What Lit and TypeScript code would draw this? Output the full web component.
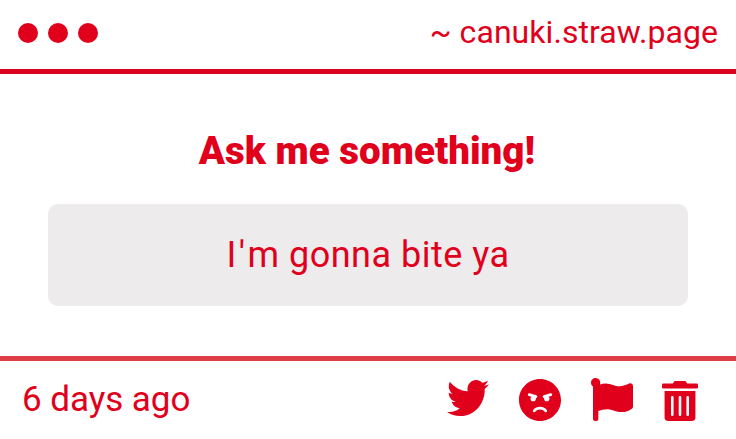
import { LitElement, html, css, svg } from 'lit';
import { customElement, property } from 'lit/decorators.js';

const ICONS = {
    twitter: {
        viewBox: '0 48 512 416',
        path: 'M459.37 151.716c.325 4.548.325 9.097.325 13.645 0 138.72-105.583 298.558-298.558 298.558-59.452 0-114.68-17.219-161.137-47.106 8.447.974 16.568 1.299 25.34 1.299 49.055 0 94.213-16.568 130.274-44.832-46.132-.975-84.792-31.188-98.112-72.772 6.498.974 12.995 1.624 19.818 1.624 9.421 0 18.843-1.3 27.614-3.573-48.081-9.747-84.143-51.98-84.143-102.985v-1.299c13.969 7.797 30.214 12.67 47.431 13.319-28.264-18.843-46.781-51.005-46.781-87.391 0-19.492 5.197-37.36 14.294-52.954 51.655 63.675 129.3 105.258 216.365 109.807-1.624-7.797-2.599-15.918-2.599-24.04 0-57.828 46.782-104.934 104.934-104.934 30.213 0 57.502 12.67 76.67 33.137 23.715-4.548 46.456-13.32 66.599-25.34-7.798 24.366-24.366 44.833-46.132 57.827 21.117-2.273 41.584-8.122 60.426-16.243-14.292 20.791-32.161 39.308-52.628 54.253z',
    },
    angry: {
        viewBox: '0 8 496 496',
        path: 'M248 8C111 8 0 119 0 256s111 248 248 248 248-111 248-248S385 8 248 8zM136 240c0-9.3 4.1-17.5 10.5-23.4l-31-9.3c-8.5-2.5-13.3-11.5-10.7-19.9 2.5-8.5 11.4-13.2 19.9-10.7l80 24c8.5 2.5 13.3 11.5 10.7 19.9-2.1 6.9-8.4 11.4-15.3 11.4-.5 0-1.1-.2-1.7-.2.7 2.7 1.7 5.3 1.7 8.2 0 17.7-14.3 32-32 32S136 257.7 136 240zm168 154.2c-27.8-33.4-84.2-33.4-112.1 0-13.5 16.3-38.2-4.2-24.6-20.5 20-24 49.4-37.7 80.6-37.7s60.6 13.8 80.6 37.7c13.8 16.5-11.1 36.6-24.5 20.5zm76.6-186.9l-31 9.3c6.3 5.8 10.5 14.1 10.5 23.4 0 17.7-14.3 32-32 32s-32-14.3-32-32c0-2.9.9-5.6 1.7-8.2-.6.1-1.1.2-1.7.2-6.9 0-13.2-4.5-15.3-11.4-2.5-8.5 2.3-17.4 10.7-19.9l80-24c8.4-2.5 17.4 2.3 19.9 10.7 2.5 8.5-2.3 17.4-10.8 19.9z',
    },
    flag: {
        viewBox: '8 0 504 512',
        path: 'M349.565 98.783C295.978 98.783 251.721 64 184.348 64c-24.955 0-47.309 4.384-68.045 12.013a55.947 55.947 0 0 0 3.586-23.562C118.117 24.015 94.806 1.206 66.338.048 34.345-1.254 8 24.296 8 56c0 19.026 9.497 35.825 24 45.945V488c0 13.255 10.745 24 24 24h16c13.255 0 24-10.745 24-24v-94.4c28.311-12.064 63.582-22.122 114.435-22.122 53.588 0 97.844 34.783 165.217 34.783 48.169 0 86.667-16.294 122.505-40.858C506.84 359.452 512 349.571 512 339.045v-243.1c0-23.393-24.269-38.87-45.485-29.016-34.338 15.948-76.454 31.854-116.95 31.854z',
    },
    trash: {
        viewBox: '0 0 448 512',
        path: 'M32 464a48 48 0 0 0 48 48h288a48 48 0 0 0 48-48V128H32zm272-256a16 16 0 0 1 32 0v224a16 16 0 0 1-32 0zm-96 0a16 16 0 0 1 32 0v224a16 16 0 0 1-32 0zm-96 0a16 16 0 0 1 32 0v224a16 16 0 0 1-32 0zM432 32H312l-9.4-18.7A24 24 0 0 0 281.1 0H166.8a23.72 23.72 0 0 0-21.4 13.3L136 32H16A16 16 0 0 0 0 48v32a16 16 0 0 0 16 16h416a16 16 0 0 0 16-16V48a16 16 0 0 0-16-16z',
    },
};

type IconName = keyof typeof ICONS;

/**
 * A single-colour icon that takes its colour from the surrounding text.
 *
 * @attr name - Key of the icon to draw.
 */
@customElement('ask-icon')
export class AskIcon extends LitElement {
    static styles = css`
        :host {
            display: block;
        }

        .icon {
            display: block;
            width: 100%;
            height: 100%;
            fill: currentColor;
        }
    `;

    @property() name: IconName = 'flag';

    render() {
        const icon = ICONS[this.name];
        return html`
            <svg class="icon" viewBox=${icon.viewBox} preserveAspectRatio="none" aria-hidden="true">
                ${svg`<path d=${icon.path}></path>`}
            </svg>
        `;
    }
}

@customElement('app-root')
export class AppRoot extends LitElement {
    static styles = css`
        :host {
            --ask-color: #e0001b;
            display: flex;
            flex-direction: column;
            height: 439px;
            background: #fff;
            color: var(--ask-color);
            font-family: Roboto, sans-serif;
            overflow: hidden;
        }

        .header {
            display: flex;
            align-items: center;
            justify-content: space-between;
            box-sizing: border-box;
            height: 74px;
            padding: 0 18px 3px;
            border-bottom: 5px solid #d9021f;
        }

        .dots {
            display: flex;
            gap: 10px;
        }

        .dot {
            width: 20px;
            height: 20px;
            border-radius: 50%;
            background: currentColor;
        }

        .site {
            margin-bottom: 2px;
            font-size: 32px;
            line-height: 38px;
            letter-spacing: 0.06px;
        }

        .body {
            flex: 1;
            display: flex;
            flex-direction: column;
            padding: 52px 48px 0;
        }

        .title {
            margin: 0 2px 28px 0;
            font-size: 38.5px;
            font-weight: 900;
            line-height: 50px;
            letter-spacing: 0.03px;
            text-align: center;
        }

        .message {
            box-sizing: border-box;
            height: 102px;
            border-radius: 10px;
            background: #edebec;
            font-size: 36px;
            line-height: 102px;
            letter-spacing: 0.5px;
            text-align: center;
        }

        .apostrophe {
            margin: 0 2px;
        }

        .footer {
            display: flex;
            justify-content: space-between;
            box-sizing: border-box;
            height: 83px;
            padding: 0 38px 0 22px;
            border-top: 5px solid #de3c47;
        }

        .time {
            padding-top: 18px;
            font-size: 35px;
            line-height: 42px;
            letter-spacing: -0.05px;
        }

        .actions {
            display: flex;
            align-items: flex-start;
            padding-top: 17px;
        }

        .action {
            width: 42px;
            height: 43px;
            margin-left: 30px;
        }

        .action.twitter {
            height: 36px;
            margin: 2px 0.5px 0 0;
        }

        .action.angry {
            height: 42px;
            margin-top: 1px;
        }

        .action.trash {
            width: 36px;
            height: 40px;
            margin: 3px 0 0 29px;
        }
    `;

    render() {
        return html`
            <header class="header">
                <div class="dots">
                    <span class="dot"></span>
                    <span class="dot"></span>
                    <span class="dot"></span>
                </div>
                <span class="site">~ canuki.straw.page</span>
            </header>
            <main class="body">
                <h1 class="title">Ask me something!</h1>
                <div class="message">I<span class="apostrophe">'</span>m gonna bite ya</div>
            </main>
            <footer class="footer">
                <span class="time">6 days ago</span>
                <div class="actions">
                    <ask-icon class="action twitter" name="twitter"></ask-icon>
                    <ask-icon class="action angry" name="angry"></ask-icon>
                    <ask-icon class="action flag" name="flag"></ask-icon>
                    <ask-icon class="action trash" name="trash"></ask-icon>
                </div>
            </footer>
        `;
    }
}

declare global {
    interface HTMLElementTagNameMap {
        'ask-icon': AskIcon;
        'app-root': AppRoot;
    }
}
